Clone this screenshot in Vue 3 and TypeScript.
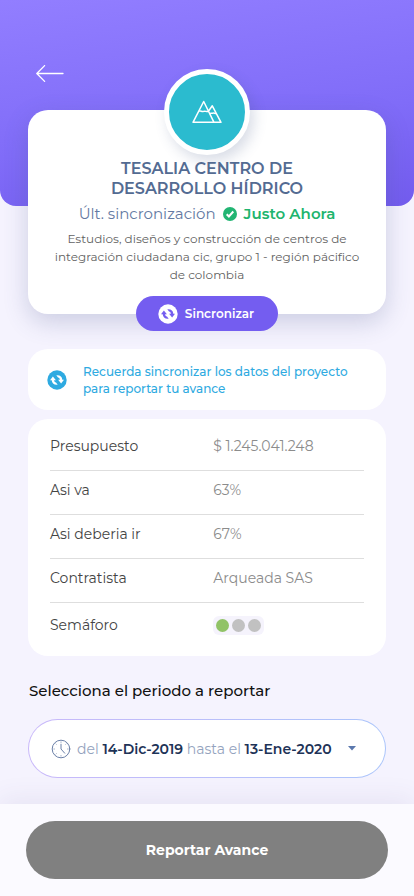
<script setup lang="ts">
import { computed, ref } from 'vue'

interface Detail {
  label: string
  value: string
}

interface Period {
  from: string
  to: string
}

const details: Detail[] = [
  { label: 'Presupuesto', value: '$ 1.245.041.248' },
  { label: 'Asi va', value: '63%' },
  { label: 'Asi deberia ir', value: '67%' },
  { label: 'Contratista', value: 'Arqueada SAS' },
]

const periods: Period[] = [{ from: '14-Dic-2019', to: '13-Ene-2020' }]
const selected = ref(0)
const period = computed(() => periods[selected.value])
</script>

<template>
  <div class="page">
    <header class="hero">
      <a class="back" href="#" aria-label="Volver">
        <svg width="28" height="18" viewBox="0 0 28 18" fill="none" stroke="#fff" stroke-width="1.3" stroke-linecap="round" stroke-linejoin="round">
          <path d="M8.6.6.8 8.5l7.8 7.9M1 8.5h26" />
        </svg>
      </a>
    </header>

    <main class="content">
      <section class="card project">
        <div class="avatar">
          <svg width="30" height="24" viewBox="0 0 30 24" fill="none" stroke="#fff" stroke-width="1.5" stroke-linejoin="round">
            <path d="M1 22.3 11.7 1.5 22 22.3zM16.6 11 20.3 5.8 29 22.3h-7" />
            <path d="M7.2 11.4c1.5-1.2 2.5.9 4.4 0 1.7-.9 2.9.9 5-.1M17.5 13.9c1.3-1.5 2.3-.3 3.3-.7 1-.5 2.1.3 3.3.2" />
          </svg>
        </div>
        <h1 class="title">TESALIA CENTRO DE<br />DESARROLLO HÍDRICO</h1>
        <p class="status">
          <span>Últ. sincronización</span>
          <svg width="14" height="14" viewBox="0 0 14 14">
            <circle cx="7" cy="7" r="7" fill="#22b573" />
            <path d="m3.7 7.2 2.2 2.3 4.4-5" fill="none" stroke="#fff" stroke-width="2" />
          </svg>
          <strong>Justo Ahora</strong>
        </p>
        <p class="description">Estudios, diseños y construcción de centros de<br />integración ciudadana cic, grupo 1 - región pácifico<br />de colombia</p>
        <button class="sync" type="button">
          <svg width="20" height="20" viewBox="0 0 20 20">
            <circle cx="10" cy="10" r="9.7" fill="#fff" />
            <path d="M5.9 6.6 3 10.3h1.7c.2 3 2.3 4.8 6 4.4L9 12.5c-1.2-.3-1.8-1-1.9-2.2h1.8zM14.1 13.4l2.9-3.7h-1.7c-.2-3-2.3-4.8-6-4.4L11 7.5c1.2.3 1.8 1 1.9 2.2h-1.8z" fill="#745df0" />
          </svg>
          Sincronizar
        </button>
      </section>

      <section class="card notice">
        <svg width="20" height="20" viewBox="0 0 20 20">
          <circle cx="10" cy="10" r="9.7" fill="#2eaae1" />
          <path d="M5.9 6.6 3 10.3h1.7c.2 3 2.3 4.8 6 4.4L9 12.5c-1.2-.3-1.8-1-1.9-2.2h1.8zM14.1 13.4l2.9-3.7h-1.7c-.2-3-2.3-4.8-6-4.4L11 7.5c1.2.3 1.8 1 1.9 2.2h-1.8z" fill="#fff" />
        </svg>
        <p>Recuerda sincronizar los datos del proyecto<br />para reportar tu avance</p>
      </section>

      <section class="card details">
        <table>
          <tbody>
            <tr v-for="item in details" :key="item.label">
              <th scope="row">{{ item.label }}</th>
              <td>{{ item.value }}</td>
            </tr>
            <tr>
              <th scope="row">Semáforo</th>
              <td>
                <span class="lights" role="img" aria-label="Verde">
                  <i class="light on"></i><i class="light"></i><i class="light"></i>
                </span>
              </td>
            </tr>
          </tbody>
        </table>
      </section>

      <label class="period-label" for="period">Selecciona el periodo a reportar</label>
      <div class="period">
        <svg class="clock" width="20" height="20" viewBox="0 0 20 20" fill="none" stroke="#6b80a8" stroke-linecap="round">
          <circle cx="10" cy="10" r="8.8" />
          <path d="M10 5.2V10l3.7 4.2" />
          <path d="M10 3v.3M10 16.7v.3M3 10h.3M16.7 10h.3M5 5l.2.2M14.8 5.2 15 5M5 15l.2-.2" stroke-width=".8" />
        </svg>
        <span class="range" aria-hidden="true">del <b>{{ period.from }}</b> hasta el <b>{{ period.to }}</b></span>
        <svg class="caret" width="8" height="5" viewBox="0 0 8 5"><path d="M0 0h8L4 4.6z" fill="#5b78ad" /></svg>
        <select id="period" v-model="selected">
          <option v-for="(item, index) in periods" :key="item.from" :value="index">del {{ item.from }} hasta el {{ item.to }}</option>
        </select>
      </div>
    </main>

    <footer class="footer">
      <button class="report" type="button">Reportar Avance</button>
    </footer>
  </div>
</template>

<style>
body {
  background: #f5f3fe;
}
</style>

<style scoped>
.page {
  display: flex;
  flex-direction: column;
  min-height: 100vh;
  background: #f5f3fe;
  font-family: Montserrat, Inter, sans-serif;
}

.page *,
.page {
  box-sizing: border-box;
}

h1,
p {
  margin: 0;
}

button {
  border: 0;
  font-family: inherit;
  color: #fff;
  cursor: pointer;
}

.hero {
  height: 206px;
  padding: 65px 36px 0;
  border-radius: 0 0 16px 16px;
  background: linear-gradient(172deg, #927eff 0%, #806cf8 60%, #735cee 100%);
}

.back {
  display: inline-block;
}

.back svg {
  display: block;
}

.content {
  display: flex;
  flex-direction: column;
  flex: 1;
  margin-top: -96px;
  padding: 0 28px 26px;
}

.card {
  background: #fff;
  border-radius: 20px;
}

.project {
  display: flex;
  flex-direction: column;
  align-items: center;
  height: 204px;
  text-align: center;
  box-shadow: 0 8px 24px rgba(70, 82, 140, 0.24);
}

.avatar {
  display: flex;
  align-items: center;
  justify-content: center;
  flex: none;
  width: 86px;
  height: 86px;
  margin-top: -41px;
  border: 5px solid #fff;
  border-radius: 50%;
  background: #2bbbcf;
  box-shadow: 4px 6px 14px rgba(60, 80, 130, 0.2);
}

.title {
  margin-top: 4px;
  font-size: 16px;
  line-height: 20px;
  font-weight: 600;
  color: #536b92;
}

.status {
  display: flex;
  align-items: center;
  gap: 7px;
  margin-top: 5px;
  font-size: 15px;
  line-height: 20px;
  color: #6379a2;
}

.status strong {
  font-weight: 600;
  color: #20b46d;
}

.description {
  margin-top: 6px;
  font-size: 12px;
  line-height: 18px;
  color: #626262;
}

.sync {
  display: flex;
  align-items: center;
  justify-content: center;
  flex: none;
  gap: 7px;
  width: 142px;
  height: 35px;
  margin-top: 12px;
  padding: 0 2px 0 0;
  border-radius: 18px;
  background: #745df0;
  font-size: 12px;
  font-weight: 600;
}

.notice {
  display: flex;
  align-items: center;
  gap: 16px;
  min-height: 61px;
  margin-top: 35px;
  padding: 0 19px;
  color: #2eaae1;
  font-size: 12px;
  line-height: 17px;
  font-weight: 500;
}

.details {
  margin-top: 9px;
  padding: 7px 22px 4px;
}

table {
  width: 100%;
  border-collapse: collapse;
  table-layout: fixed;
  font-size: 14px;
  line-height: 20px;
}

tr {
  height: 44px;
  border-bottom: 1px solid #dedede;
}

tr:last-child {
  height: 50px;
  border: 0;
}

th,
td {
  padding: 0 0 4px;
  text-align: left;
  font-weight: 400;
}

th {
  width: 52%;
  color: #444;
}

td {
  color: #8c8c8c;
}

.lights {
  display: flex;
  gap: 3px;
  width: fit-content;
  padding: 3px;
  border-radius: 6px;
  background: #f5f3fc;
}

.light {
  width: 13px;
  height: 13px;
  border-radius: 50%;
  background: #c1c1c1;
}

.light.on {
  background: #91c367;
}

.period-label {
  margin: 25px 0 0 1px;
  font-size: 15px;
  line-height: 20px;
  font-weight: 500;
  color: #111;
}

.period {
  position: relative;
  display: flex;
  align-items: center;
  min-height: 59px;
  margin-top: 18px;
  padding: 0 29px 0 22px;
  border: 1px solid transparent;
  border-radius: 30px;
  background:
    linear-gradient(#fff, #fff) padding-box,
    linear-gradient(90deg, #c9b8fa, #abc5fb) border-box;
}

.clock {
  flex: none;
}

.range {
  margin-left: 6px;
  font-size: 14px;
  line-height: 20px;
  white-space: nowrap;
  color: #94a3be;
}

.range b {
  font-weight: 600;
  color: #1e3357;
}

.caret {
  flex: none;
  margin-left: auto;
}

.period select {
  position: absolute;
  inset: 0;
  width: 100%;
  height: 100%;
  opacity: 0;
  cursor: pointer;
}

.footer {
  padding: 17px 26px;
  background: #fbfaff;
  box-shadow: 0 -6px 24px rgba(80, 70, 130, 0.08);
}

.report {
  display: block;
  width: 100%;
  height: 58px;
  border-radius: 29px;
  background: #808080;
  font-size: 14px;
  font-weight: 700;
}
</style>
